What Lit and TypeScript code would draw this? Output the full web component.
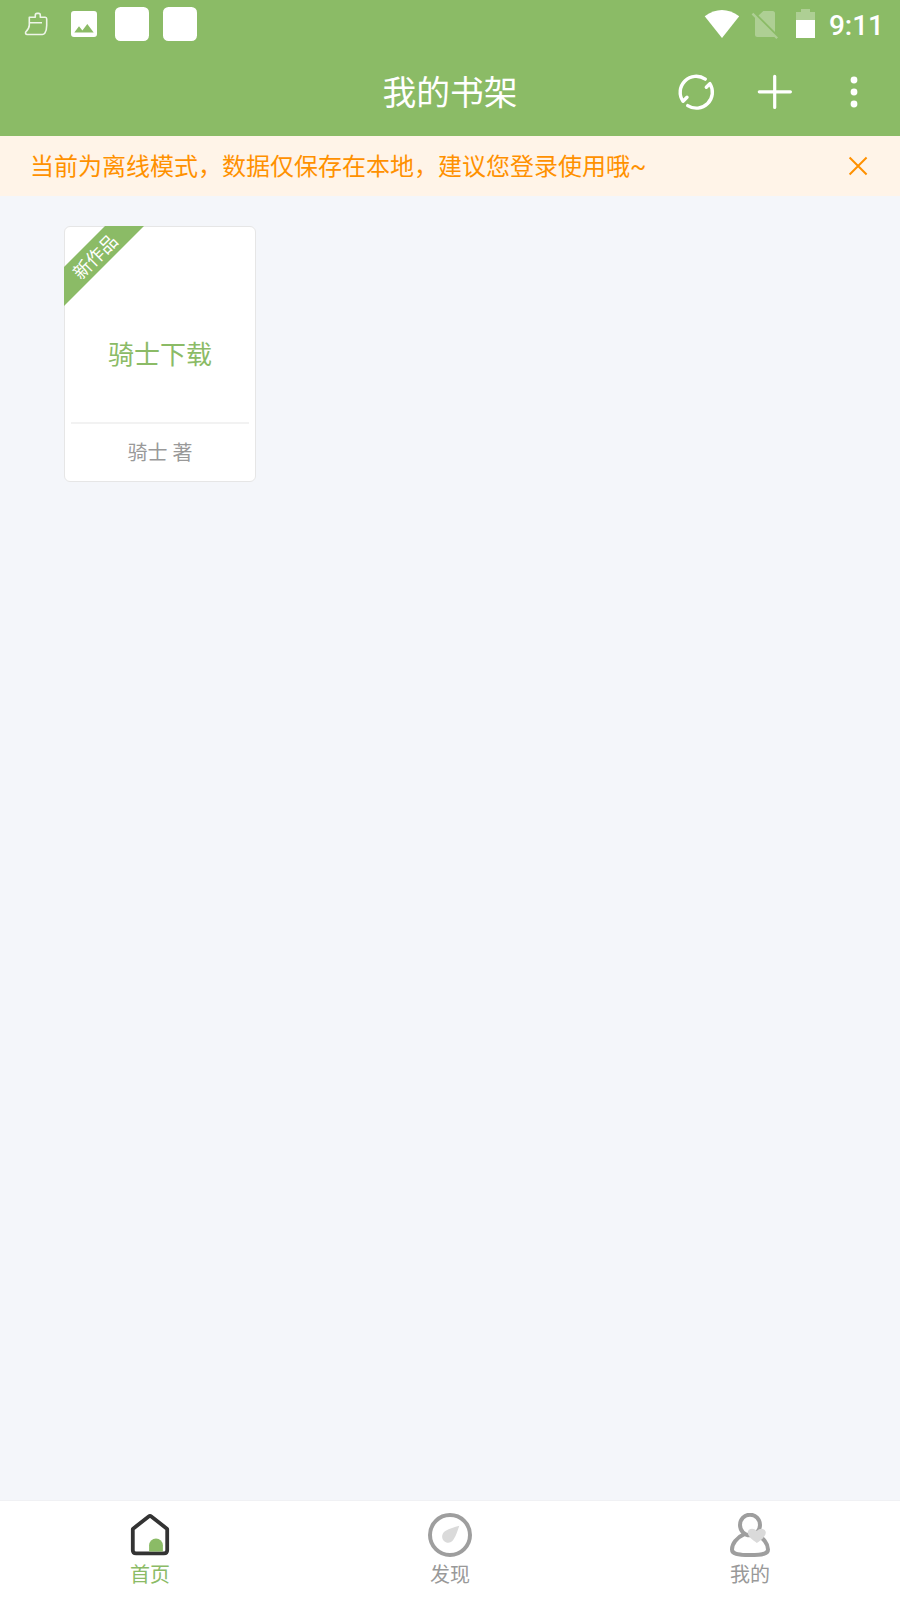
import { LitElement, html, css, svg } from "lit";
import { customElement } from "lit/decorators.js";

const tabIcons = {
  home: svg`
    <path d="M4.8 15.9 20.7 3.5Q22 2.5 23.3 3.5L39.2 15.9V37.3Q39.2 40.4 35.9 40.4H8.1Q4.8 40.4 4.8 37.3Z" fill="none" stroke="#333" stroke-width="3.8" stroke-linejoin="round"/>
    <path d="M21.1 38.5V32.3a6.9 6.9 0 0 1 13.8 0V38.5Z" fill="#8bbb66"/>`,
  find: svg`
    <circle cx="22" cy="22" r="20" fill="none" stroke="#9e9e9e" stroke-width="4"/>
    <path d="M31.3 12.7C29.6 17.5 28.4 22 25.5 26.5C22.8 30.6 18.6 30.5 16 28C13.3 25.2 13.4 20.8 17.3 18C21.5 15.2 26.5 14.2 31.3 12.7Z" fill="#dadada"/>`,
  mine: svg`
    <path d="M16.3 21.2C8.5 24.6 4 31 4 36.4C4 40.8 9 42 22 42S40 40.8 40 36.4C40 31 35.5 24.6 27.7 21.2" fill="none" stroke="#9e9e9e" stroke-width="4"/>
    <ellipse cx="22" cy="12" rx="10" ry="10.3" fill="none" stroke="#9e9e9e" stroke-width="4"/>
    <path d="M28.8 30C25 27.4 19.7 23.4 19.7 19.6C19.7 15.6 25.5 14.4 28.8 18C32.1 14.4 37.8 15.6 37.8 19.6C37.8 23.4 32.8 27.4 28.8 30Z" fill="#dadada"/>`,
};

@customElement("app-root")
export class AppRoot extends LitElement {
  static styles = css`
    :host {
      display: flex;
      flex-direction: column;
      height: 1600px;
      background: #f4f6fa;
      font-family: Roboto, "Noto Sans CJK SC", sans-serif;
      overflow: hidden;
    }
    svg { display: block; flex: none; }
    .status {
      height: 45px;
      flex: none;
      display: flex;
      align-items: flex-start;
      background: #8bbb66;
      justify-content: space-between;
    }
    .clock {
      font: 500 28px/44px Roboto, sans-serif;
      color: #fff;
      padding-top: 4px;
      margin-right: 16px;
    }
    .right { display: flex; }
    .header {
      height: 91px;
      flex: none;
      display: grid;
      grid-template-columns: 1fr auto 1fr;
      align-items: center;
      background: #8bbb66;
      color: #fff;
    }
    .title {
      grid-column: 2;
      font-family: "Noto Sans CJK SC", sans-serif;
      font-size: 33.75px;
      font-weight: 400;
      line-height: 50px;
      margin: 1px 0 0;
    }
    .actions { justify-self: end; }
    .notice {
      height: 60px;
      flex: none;
      display: flex;
      align-items: center;
      justify-content: space-between;
      background: #fff4e8;
      color: #ff9100;
      padding: 0 30px;
      font-size: 24px;
    }
    .notice span { line-height: 36px; margin-top: 2px; }
    .shelf {
      flex: 1;
      padding: 30px 64px;
    }
    .book {
      position: relative;
      box-sizing: border-box;
      width: 192px;
      height: 256px;
      border: 1px solid #e6e6e6;
      border-radius: 6px;
      background: #fff;
      display: flex;
      flex-direction: column;
      padding: 0 6px;
      text-align: center;
    }
    .name {
      height: 197px;
      border-bottom: 2px solid #f2f2f2;
      font-family: "Noto Sans CJK SC", sans-serif;
      color: #8bbb66;
      font-size: 26px;
      line-height: 38px;
      padding-top: 107px;
      box-sizing: border-box;
    }
    .author {
      font-family: "Noto Sans CJK SC", sans-serif;
      color: #999;
      font-size: 20px;
      line-height: 30px;
      padding-top: 13px;
      word-spacing: 0.6px;
    }
    .ribbon { position: absolute; left: -1px; top: -1px; }
    .ribbon text {
      font-family: "Noto Sans CJK SC", sans-serif;
      font-size: 18px;
      fill: #fff;
    }
    .tabs {
      height: 100px;
      box-sizing: border-box;
      border-top: 1px solid #f0f1f4;
      flex: none;
      display: grid;
      grid-template-columns: repeat(3, 1fr);
      background: #fff;
    }
    .tab {
      display: flex;
      flex-direction: column;
      align-items: center;
      padding-top: 12px;
      font-family: "Noto Sans CJK SC", sans-serif;
      color: #999;
      font-size: 20px;
      line-height: 30px;
      gap: 2px;
    }
    .active { color: #8bbb66; }
  `;

  private tab(icon: keyof typeof tabIcons, label: string, active = false) {
    return html`<div class="tab ${active ? "active" : ""}">
      <svg width="44" height="44" viewBox="0 0 44 44">${tabIcons[icon]}</svg>
      <span>${label}</span>
    </div>`;
  }

  render() {
    return html`
      <div class="status">
        <svg width="220" height="45" viewBox="0 0 220 45">
          <path d="M29.3 17.3H35.3V15.2Q35.3 13.4 37 13.4H38.7Q40.3 13.4 40.3 15.2V17.3H45.3Q46.7 17.3 46.7 19V25.5Q46.7 30.5 44.8 33.2Q44 34.5 42.3 34.5H27.2Q25 34.2 25.7 32Q29.3 28.5 29.3 25ZM29.5 22.8H42" fill="none" stroke="#fff" stroke-opacity=".85" stroke-width="1.6" stroke-linejoin="round"/>
          <path fill-rule="evenodd" d="M74 11H94Q97 11 97 14V34Q97 37 94 37H74Q71 37 71 34V14Q71 11 74 11ZM74.3 32.5H93.7L87.3 24L82.4 30.5L79 26.3Z" fill="#fff"/>
          <rect x="115" y="7" width="34" height="34" rx="5.5" fill="#fff"/>
          <rect x="163" y="7" width="34" height="34" rx="5.5" fill="#fff"/>
        </svg>
        <div class="right">
          <svg width="149" height="45" viewBox="680 0 149 45">
            <path d="M704.7 16.3Q721.9 3.5 739.2 16.3L722 38Z" fill="#fff"/>
            <g fill="#fff" opacity=".3">
              <path d="M763.3 11H772.5Q775 11 775 13.5V32L758.5 15.6Z"/>
              <path d="M755 16.5 775 36.5Q774 37 772.5 37H757.5Q755 37 755 34.5Z"/>
              <path d="M753.3 12.7 778 37.4 776.3 39.1 751.6 14.4Z"/>
              <path d="M796 20V12H801V9H810V12H815V20Z"/>
            </g>
            <path d="M796 20H815V38H796Z" fill="#fff"/>
          </svg>
          <span class="clock">9:11</span>
        </div>
      </div>
      <div class="header">
        <h1 class="title">我的书架</h1>
        <svg class="actions" width="240" height="91" viewBox="660 45 240 91" fill="none" stroke="#fff" stroke-width="3.4" stroke-linecap="round" stroke-linejoin="round">
          <path d="M705.3 79.1A16 16 0 0 0 683 101.3L687 97.2M687.7 105.6A16 16 0 0 0 709.9 83.6L706.3 87.3"/>
          <path stroke-width="3.2" d="M759.3 91.8H790.4M774.7 76.3V107.4"/>
          <g fill="#fff" stroke="none">
            <circle cx="854" cy="80" r="3.4"/><circle cx="854" cy="92" r="3.4"/><circle cx="854" cy="104" r="3.4"/>
          </g>
        </svg>
      </div>
      <div class="notice">
        <span>当前为离线模式，数据仅保存在本地，建议您登录使用哦~</span>
        <svg width="22" height="22" viewBox="0 0 22 22"><path d="M1.6 2.5 18.6 19.5M18.6 2.5 1.6 19.5" stroke="#ff9100" stroke-width="2"/></svg>
      </div>
      <main class="shelf">
        <article class="book">
          <svg class="ribbon" width="81" height="81" viewBox="0 0 81 81">
            <path d="M0 41 41 0H80L0 80Z" fill="#8bbb66"/>
            <text transform="translate(31 30.5) rotate(-45)" x="0" y="6.8" text-anchor="middle">新作品</text>
          </svg>
          <div class="name">骑士下载</div>
          <div class="author">骑士 著</div>
        </article>
      </main>
      <nav class="tabs">
        ${this.tab("home", "首页", true)} ${this.tab("find", "发现")} ${this.tab("mine", "我的")}
      </nav>
    `;
  }
}
